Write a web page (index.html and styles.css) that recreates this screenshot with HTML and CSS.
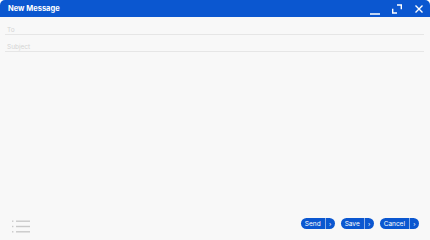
FILE: index.html
```html
<!DOCTYPE html>
<html>
<head>
<meta charset="utf-8">
<link rel="stylesheet" href="styles.css">
</head>
<body>
<div class="window">
  <header class="titlebar">
    <span class="title">New Message</span>
    <div class="controls">
      <svg class="ico" width="10" height="12" viewBox="0 0 10 12"><path d="M0 11H10" stroke="#fff" stroke-width="1.4"/></svg>
      <svg class="ico" width="10" height="12" viewBox="0 0 10 12"><path d="M5 2H9.3V6.3M0.7 5.7V10H5" stroke="#fff" stroke-width="1.4" fill="none"/></svg>
      <svg class="ico" width="10" height="12" viewBox="0 0 10 12"><path d="M1.5 2.5L8.5 9.5M8.5 2.5L1.5 9.5" stroke="#fff" stroke-width="1.4"/></svg>
    </div>
  </header>
  <main class="content">
    <div class="field">To</div>
    <div class="field">Subject</div>
    <div class="body-area"></div>
  </main>
  <footer class="footer">
    <svg class="list" width="18" height="13" viewBox="0 0 18 13"><g fill="#c9c9c9"><rect x="0" y="0.5" width="1.4" height="1.4"/><rect x="4" y="0.5" width="14" height="1.4"/><rect x="0" y="5.8" width="1.4" height="1.4"/><rect x="4" y="5.8" width="14" height="1.4"/><rect x="0" y="11.1" width="1.4" height="1.4"/><rect x="4" y="11.1" width="14" height="1.4"/></g></svg>
    <div class="actions">
      <div class="btn"><span class="main">Send</span><span class="drop">›</span></div>
      <div class="btn"><span class="main">Save</span><span class="drop">›</span></div>
      <div class="btn"><span class="main">Cancel</span><span class="drop">›</span></div>
    </div>
  </footer>
</div>
</body>
</html>
```
FILE: styles.css
```css
html, body { margin: 0; padding: 0; background: #ffffff; }
body { width: 430px; height: 240px; overflow: hidden; font-family: Inter, "Open Sans", sans-serif; }
.window { width: 430px; height: 240px; display: flex; flex-direction: column; background: #f8f8f8; border-radius: 5px 5px 0 0; overflow: hidden; }
.titlebar { height: 17px; flex: none; background: #0b57d0; display: flex; align-items: center; justify-content: space-between; padding: 0 6px 0 8px; }
.title { color: #fff; font-size: 7.5px; font-weight: 700; }
.controls { display: flex; gap: 12px; align-items: center; }
.ico { display: block; }
.content { flex: 1; display: flex; flex-direction: column; padding: 1px 6px 0 5px; }
.field { height: 17px; box-sizing: border-box; border-bottom: 1px solid #e6e6e6; font-size: 6.5px; color: #d4d4d4; padding: 8px 0 0 2px; }
.body-area { flex: 1; }
.footer { height: 28px; flex: none; display: flex; align-items: flex-start; justify-content: space-between; padding: 0 11px 0 12px; }
.list { margin-top: 8px; }
.actions { display: flex; gap: 6px; margin-top: 6px; }
.btn { display: flex; height: 11px; border-radius: 6px; background: #0b57d0; color: #fff; font-size: 6.5px; align-items: stretch; overflow: hidden; }
.main { padding: 0 4px 0 4px; display: flex; align-items: center; }
.drop { width: 9px; border-left: 1px solid #8fb0e6; display: flex; align-items: center; justify-content: center; font-size: 6px; }
```
